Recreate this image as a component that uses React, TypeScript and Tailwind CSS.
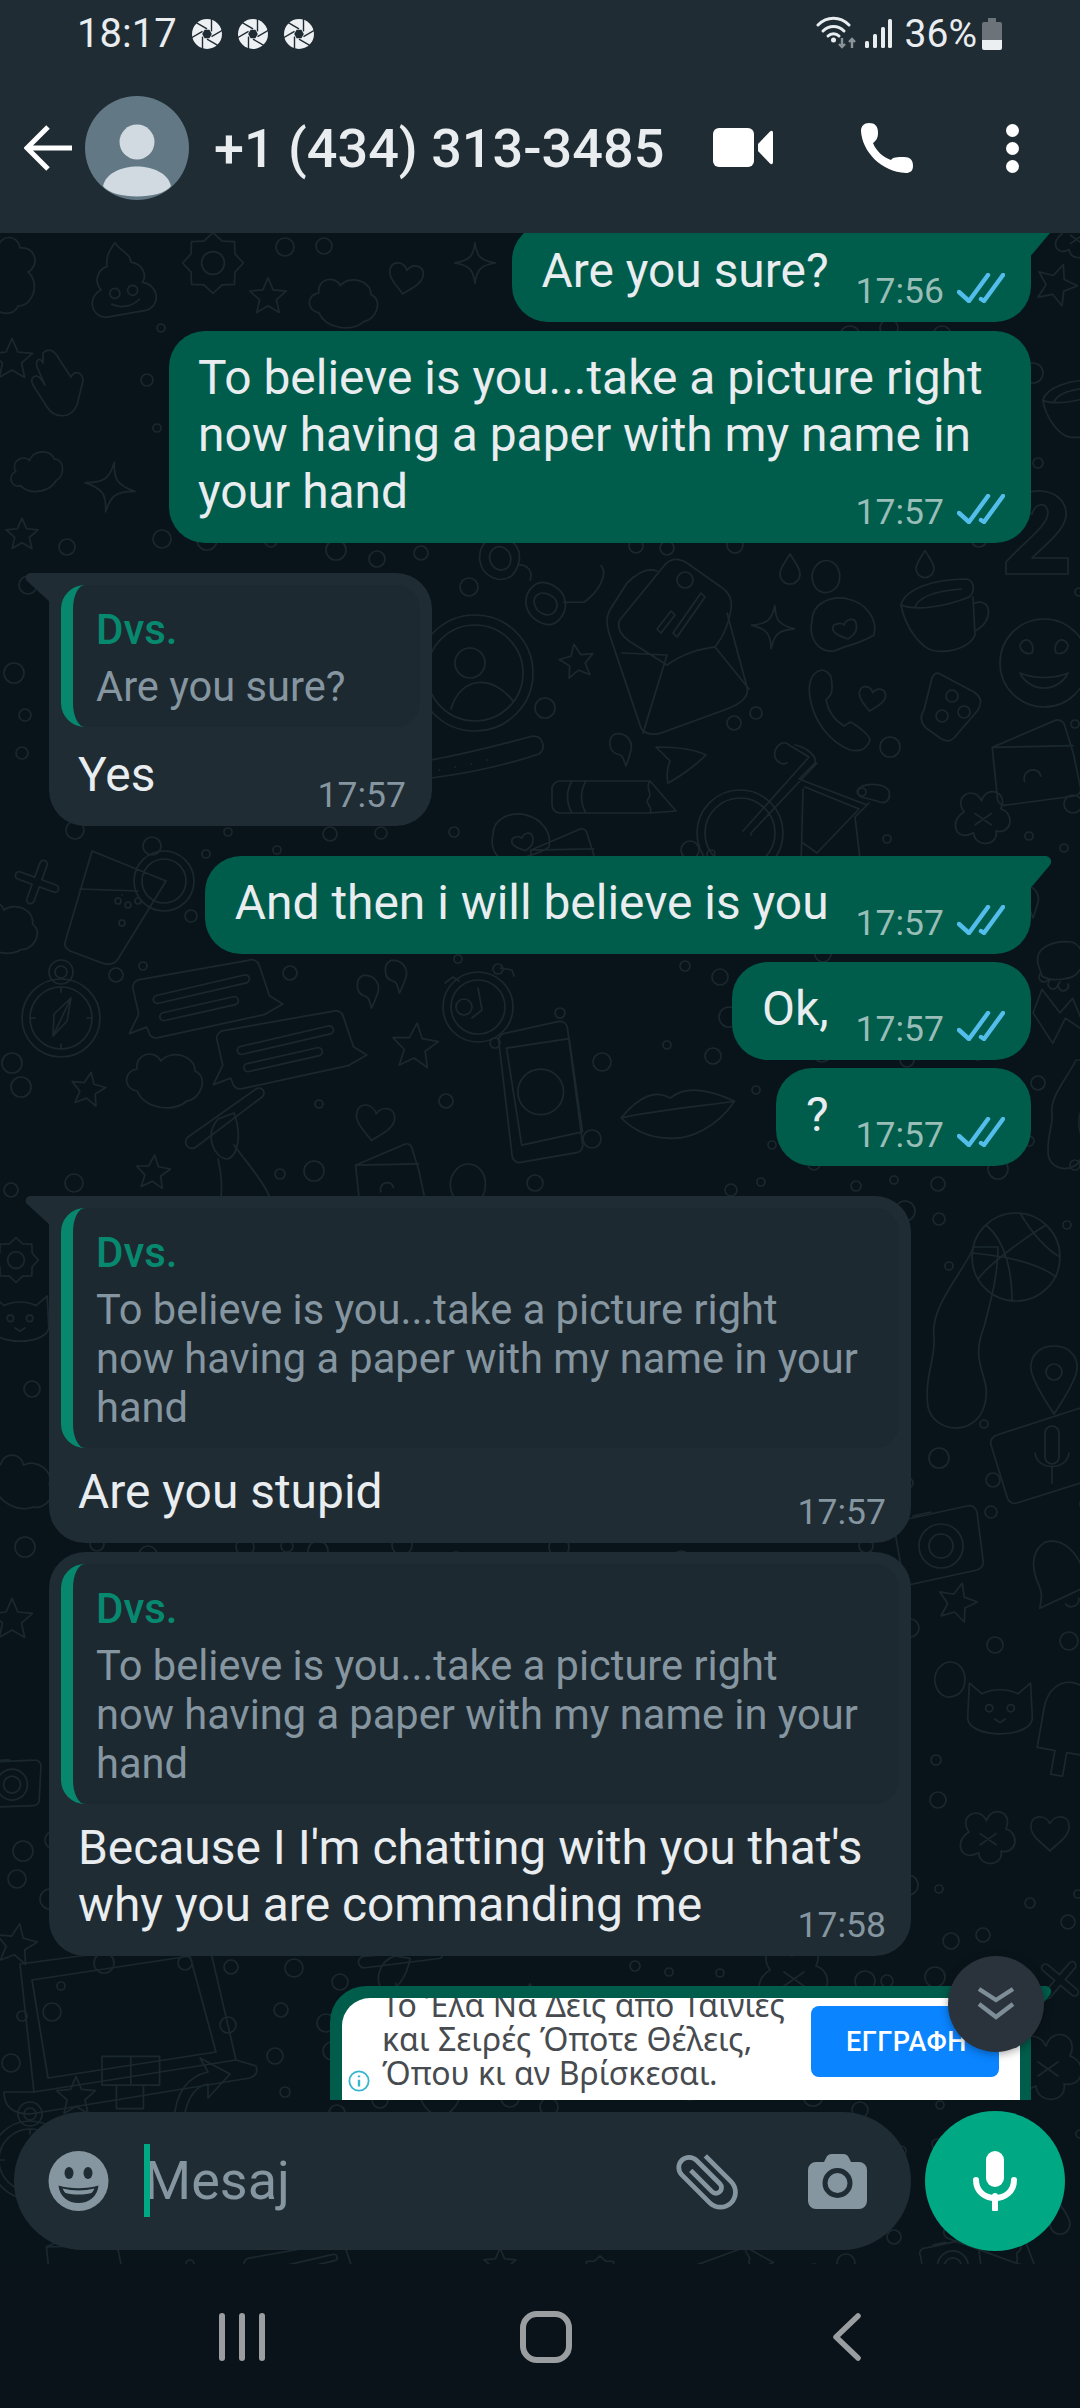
import React from "react";

const c = (x: number, y: number, r: number) =>
  `M${x - r} ${y}a${r} ${r} 0 1 0 ${2 * r} 0a${r} ${r} 0 1 0 ${-2 * r} 0`;

const starPath = (() => {
  let d = "";
  for (let i = 0; i < 10; i++) {
    const r = i % 2 === 0 ? 24 : 11;
    const a = (Math.PI / 5) * i - Math.PI / 2;
    d += `${i === 0 ? "M" : "L"}${(r * Math.cos(a)).toFixed(1)} ${(r * Math.sin(a)).toFixed(1)}`;
  }
  return d + "Z";
})();

const gearPath = (() => {
  let d = "";
  for (let i = 0; i < 16; i++) {
    const r = i % 2 === 0 ? 32 : 25;
    const a = (Math.PI / 8) * i;
    d += `${i === 0 ? "M" : "L"}${(r * Math.cos(a)).toFixed(1)} ${(r * Math.sin(a)).toFixed(1)}`;
  }
  return d + "Z" + c(0, 0, 12);
})();

const D: Record<string, string> = {
  star: starPath,
  gear: gearPath,
  sparkle: "M0 -24C2 -8 6 -3 24 0C6 3 2 8 0 24C-2 8 -6 3 -24 0C-6 -3 -2 -8 0 -24Z",
  plus: "M-4 -20a4 4 0 0 1 8 0v16h16a4 4 0 0 1 0 8h-16v16a4 4 0 0 1-8 0v-16h-16a4 4 0 0 1 0-8h16z",
  heart: "M0 -8C-6 -20 -24 -20 -24 -4C-24 8 -8 18 0 26C8 18 24 8 24 -4C24 -20 6 -20 0 -8Z",
  cloud: "M-28 14C-42 12 -42 -6 -28 -8C-30 -24 -10 -28 -4 -16C6 -28 30 -22 30 -6C44 0 36 22 22 24C8 36 -20 32 -28 14Z",
  quote: "M-8 -14C4 -16 10 -6 8 2C6 10 5 13 3 18C0 10 0 7 -6 6C-14 4 -16 -10 -8 -14Z",
  drop: "M0 -16C6 -6 10 -2 10 4A10 10 0 0 1 -10 4C-10 -2 -6 -6 0 -16Z",
  compass: c(0, 0, 39) + c(0, 0, 31) + c(0, -46, 6) + c(0, -46, 12) + "M10 -20L-8 18L-7 -4ZM10 -20L6 3L-8 18M0 -31V-26M0 31V26M31 0H26M-31 0H-26",
  chat: "M-68 -16a8 8 0 0 1 6 -10L50 -30a8 8 0 0 1 10 6L66 8L78 18L58 26L-50 34a8 8 0 0 1 -8 -4L-60 22L-78 26L-66 8Z M-46 -8L44 -16a4 4 0 0 1 1 8L-45 0a4 4 0 0 1 -1 -8Z M-42 10L30 4a4 4 0 0 1 1 8L-41 18a4 4 0 0 1 -1 -8Z",
  envelope: "M-20 -72C-30 -76 -40 -70 -50 -60L-66 -35C-72 -25 -70 -18 -68 -10L-36 85C-32 92 -22 92 -16 90L50 66C66 60 72 52 70 44L50 -30M-58 -22C-60 -14 -56 -8 -48 -2L-10 22C10 8 25 6 38 4C46 -6 52 -20 54 -34C56 -46 50 -52 44 -56L10 -80C0 -86 -8 -84 -14 -76ZM-55 10L-10 12L-34 90M38 4L72 46M-20 -14L-6 -32L-2 -28L-16 -10ZM-4 -10L24 -50L28 -46L0 -6Z",
  glasses: "M-50 -24C-68 -24 -72 -4 -64 8C-54 22 -34 20 -28 6C-26 -4 -28 -24 -50 -24ZM-48 -14C-58 -14 -60 -4 -56 2C-50 10 -40 10 -36 2C-34 -4 -38 -14 -48 -14ZM12 -4C-6 -4 -10 14 -2 26C8 38 30 38 34 24C38 10 30 -4 12 -4ZM14 6C4 6 0 14 4 20C10 28 22 28 26 20C28 12 24 6 14 6ZM-28 -6C-20 -10 -12 -8 -10 2M30 6L48 -4M48 -4C56 -20 56 -40 46 -44",
  pencil: "M-50 -16H40L66 14L40 16H-50a8 8 0 0 1 -8 -8V-8a8 8 0 0 1 8 -8ZM-38 -16C-44 -6 -44 6 -38 16M-24 -16C-30 -6 -30 6 -24 16M40 -16C34 -8 44 -4 38 2C34 6 44 10 40 16",
  plane: "M-24 -16C-4 -16 14 -14 26 -8C14 4 -4 16 -12 20C-14 10 -12 4 -10 -2Z",
  bike: c(-57, 26, 43) + c(-57, 26, 35) + "M-54 24L12 -50L-8 -62C-14 -68 -24 -60 -22 -50C-20 -44 -14 -42 -10 -44M-2 -62C8 -60 20 -52 18 -44L2 -28L70 -2M-46 28L-46 26L20 -44M6 -18L4 60M8 -20L62 2L20 46L6 36M64 -20C70 -24 88 -24 92 -16C94 -6 88 -2 80 -6L64 -10C58 -14 60 -18 64 -20ZM72 -4L58 10L64 60",
  handset: "M-18 -40C-30 -38 -32 -24 -30 -12C-26 12 -10 32 10 40C20 42 26 40 30 30C30 26 20 18 14 14C10 10 8 14 4 16C-6 10 -12 0 -14 -10C-10 -14 -8 -16 -8 -22C-8 -30 -8 -38 -18 -40Z",
  cup: "M-34 -12C-30 -28 -2 -38 32 -38C40 -36 40 -24 34 -20C10 -10 -20 -6 -34 -12ZM-34 -12C-30 10 -14 32 0 34C20 36 36 28 40 18L38 -20M-20 -10C-16 -20 0 -26 26 -28M40 -14C56 -20 60 4 40 14",
  avatar: c(0, 0, 58) + c(0, 0, 48) + c(-5, -10, 15) + "M-24 36C-14 2 18 2 38 28",
  strap: "M-62 10C-20 2 10 -6 40 -14a10 10 0 0 1 6 18C10 16 -30 24 -62 28M-54 20h.5M-38 17h.5M-22 14h.5M-6 10h.5",
  blobheart: "M-30 -6C-30 -24 -10 -32 6 -28C24 -24 36 -8 32 8C20 16 6 18 -8 24C-24 26 -34 10 -30 -6ZM6 12C-6 8 -12 4 -8 -2C-4 -4 0 -4 2 -2C4 -8 12 -10 14 -4C16 4 12 8 6 12Z",
  dice: "M-10 -34L24 -16C32 -10 32 -6 28 2L4 30C0 34 -4 34 -10 30L-24 20C-30 14 -30 8 -26 2L-18 -30C-16 -34 -14 -36 -10 -34Z" + c(2, -12, 6) + c(-8, 8, 6) + c(14, 4, 6),
  hand: "M-26 -30C-20 -36 -14 -32 -10 -24L2 -6C6 -14 14 -10 14 -2L8 22C2 36 -14 36 -22 24L-36 2C-40 -6 -32 -10 -28 -4L-24 2L-32 -16C-34 -24 -28 -26 -26 -20Z",
  poop: "M0 -40C4 -30 14 -26 12 -18C24 -14 26 -2 20 4C34 8 36 28 20 32H-22C-38 28 -36 8 -22 4C-28 -6 -22 -16 -12 -18C-12 -28 -6 -34 0 -40Z" + c(-9, 10, 5) + c(9, 10, 5) + "M-14 20C-6 26 6 26 14 20",
  glass: "M-38 -54L36 -24L-12 54C-16 60 -22 60 -28 58L-60 46C-66 42 -66 40 -64 34ZM-50 -16L8 -14M-8 -10h.1" + c(-12, -4, 3) + c(-2, 0, 3) + c(8, -4, 3) + c(-8, 18, 3) + c(34, -24, 30) + c(34, -24, 22),
  phone: "M-30 -60L24 -72a8 8 0 0 1 10 6L50 56a8 8 0 0 1 -6 10L-14 76a8 8 0 0 1 -10 -6L-38 -50a8 8 0 0 1 8 -10ZM-30 -44L36 -54L50 44L-14 58Z" + c(6, 2, 24),
  lips: "M-50 0C-30 -20 -16 -22 -4 -14C10 -24 30 -20 54 -6C36 16 10 26 -10 22C-26 20 -40 12 -50 0ZM-50 0C-20 -4 20 -4 54 -6",
  laptop: "M-120 -66L60 -90a10 10 0 0 1 10 8L96 30L-106 62ZM-108 -50L50 -74L76 22L-92 48ZM-136 62L-106 62L96 30L116 36C118 42 116 46 110 48L-110 84C-128 84 -136 76 -136 62Z",
  ball: c(0, 0, 44) + "M-30 -32C-10 -16 -4 16 -4 44M30 -32C10 -20 -26 6 -38 22M-44 -4C-20 -2 20 4 40 20M4 -44C16 -24 30 -8 44 0",
  camera: "M-34 -20L30 -34a8 8 0 0 1 10 6L46 20a8 8 0 0 1 -6 10L-24 44a8 8 0 0 1 -10 -6L-42 -8a8 8 0 0 1 8 -12Z" + c(4, 6, 22) + c(4, 6, 12) + "M-24 -24L-6 -28",
  pin: "M0 -34C18 -34 26 -20 22 -6C18 6 8 22 0 34C-8 22 -18 6 -22 -6C-26 -20 -18 -34 0 -34Z" + c(0, -8, 8),
  card: "M-50 -18L30 -44a8 8 0 0 1 10 4L56 14a8 8 0 0 1 -4 10L-30 50a8 8 0 0 1 -10 -6L-56 -8a8 8 0 0 1 6 -10ZM-2 -20a7 7 0 0 1 14 0V4a7 7 0 0 1 -14 0ZM-12 0C-10 18 20 18 22 0M5 14V30",
  popsicle: "M-24 -10C-24 -50 24 -50 24 -10V30H6V54H-6V30H-24Z",
  bell: "M0 -40C18 -38 26 -20 26 0C26 12 32 18 36 24H-36C-32 18 -26 12 -26 0C-26 -20 -18 -38 0 -40ZM-8 32C-6 40 6 40 8 32",
  squares: "M-40 -24L-8 -24L-8 8L-40 8ZM-8 -24H24V8H-8ZM-24 8V34H6V8",
  arrow: "M-26 30C-24 0 -10 -14 8 -18L0 -32L30 -16L8 8L8 -6C-4 -4 -14 8 -16 30Z",
  bolt: "M-20 -34L0 -8L14 -24L30 14L6 -2L-8 26L-30 -8Z",
  foot: "M-22 -6C-26 -24 -4 -30 12 -28C24 -24 26 -6 18 2C14 10 -10 12 -18 6ZM-20 4a5 5 0 1 0 8 6M-10 10a5 5 0 1 0 8 4M0 12a5 5 0 1 0 8 2",
  long: "M10 -100C-4 -70 -34 -40 -30 -10C-28 10 -40 30 -36 60C-30 86 10 90 20 60C30 30 4 20 20 -20C26 -44 34 -70 34 -100C26 -100 18 -100 10 -100Z",
  blob: "M0 -30C18 -30 28 -12 24 8C20 24 6 30 -6 28C-22 24 -28 4 -24 -10C-20 -22 -10 -30 0 -30Z",
  face: c(0, 0, 44) + "M-24 -18C-20 -28 -8 -22 -12 -10C-18 -8 -24 -12 -24 -18ZM24 -18C20 -28 8 -22 12 -10C18 -8 24 -12 24 -18ZM-24 10C-14 30 14 30 24 10C10 16 -10 16 -24 10Z",
  cat: "M-34 -30L-20 -18C-8 -24 8 -24 20 -18L34 -30L36 10C32 32 -32 32 -36 10Z" + c(-12, -2, 4) + c(12, -2, 4) + "M-6 10L0 14L6 10",
  two: "M-26 -24C-20 -46 24 -44 26 -18C28 -2 6 14 -8 28H28V44H-34V32C-14 10 8 -4 8 -18C6 -28 -4 -28 -8 -16Z",
  flower: "M-20 -10C-34 -30 -8 -44 2 -24C8 -44 36 -36 26 -14C44 -8 40 18 20 14C24 32 -6 36 -8 16C-30 28 -40 2 -20 -10ZM-6 -8L14 6M14 -8L-6 6",
  cake: "M-42 -14L28 -44a8 8 0 0 1 10 4L48 -8L56 30a8 8 0 0 1 -6 10L-26 50a8 8 0 0 1 -10 -6ZM-42 -14L48 -16M-6 24C-10 10 10 6 12 18",
  hat: "M-40 12L28 -36a5 5 0 0 1 6 8L-32 22a5 5 0 0 1 -8 -10ZM-10 -6C-24 10 -14 34 0 34C10 30 14 10 6 -12ZM6 20C20 40 40 60 46 84M-10 34C-6 50 -6 70 -8 84",
};

// [name, x, y, scale, rotation]
const P: [string, number, number, number, number][] = [
  ["cloud", 12, 276, 1, 90], ["poop", 122, 282, 1, -10], ["gear", 213, 263, 0.95, 0], ["star", 268, 297, 0.8, 0],
  ["cloud", 344, 300, 0.9, 0], ["heart", 406, 276, 0.7, 10], ["sparkle", 475, 263, 0.85, 0], ["star", 1056, 285, 0.9, 20],
  ["flower", 1074, 240, 0.6, 0], ["hand", 69, 383, 1, 0], ["cloud", 36, 470, 0.7, -20], ["sparkle", 110, 487, 1.05, 10],
  ["star", 12, 360, 0.9, 0], ["star", 22, 535, 0.7, 0], ["cup", 1070, 410, 0.8, 0], ["two", 1040, 530, 1, 0],
  ["glasses", 540, 583, 1, 28], ["avatar", 475, 673, 1, 0], ["star", 577, 662, 0.75, -10], ["envelope", 677, 643, 1, 0],
  ["sparkle", 773, 627, 0.9, 5], ["blobheart", 842, 627, 1, 0], ["handset", 840, 710, 1, 0], ["heart", 872, 697, 0.55, 10],
  ["cup", 935, 617, 1, 0], ["dice", 950, 708, 1, 0], ["strap", 493, 750, 1, 0], ["pencil", 610, 797, 1, 0],
  ["plane", 680, 763, 1, 0], ["quote", 623, 748, 1, 0], ["bike", 797, 807, 1, 0], ["face", 1044, 663, 1, 0],
  ["blob", 826, 577, 0.55, 0], ["drop", 790, 570, 1, 0], ["drop", 925, 565, 0.9, 0], ["cake", 1030, 760, 0.9, 0],
  ["cake", 560, 860, 0.7, 0], ["blobheart", 520, 840, 0.9, 0], ["flower", 980, 820, 0.8, 0],
  ["glass", 130, 905, 1, 0], ["plus", 37, 882, 0.95, 20], ["cloud", 5, 925, 0.9, 10], ["compass", 61, 1018, 1, 0],
  ["chat", 203, 997, 1, -8], ["chat", 287, 1048, 1, -8], ["quote", 370, 990, 1, 5], ["quote", 398, 975, 1, 5],
  ["star", 415, 1047, 1, 5], ["cloud", 165, 1077, 1, 0], ["star", 88, 1090, 0.75, 10],
  ["heart", 375, 1120, 0.8, 10], ["star", 153, 1173, 0.75, 5], ["hat", 228, 1125, 1, 0], ["cake", 385, 1175, 0.7, 0],
  ["phone", 535, 1090, 0.95, 0], ["lips", 676, 1113, 1.1, -5], ["blob", 468, 1185, 0.7, 0],
  ["foot", 1060, 970, 1, 0], ["bolt", 1060, 1020, 0.9, 0], ["long", 1070, 1120, 0.6, 0],
  ["quote", 1030, 900, 1, 0], ["ball", 1016, 1257, 1, 0], ["pin", 1054, 1380, 1, 0], ["long", 964, 1347, 1, 0],
  ["card", 1047, 1453, 1, 0], ["camera", 937, 1540, 1, 0], ["star", 957, 1603, 0.85, 15], ["bell", 1060, 1575, 0.9, -25],
  ["popsicle", 1066, 1722, 1, 10], ["cat", 1000, 1710, 0.9, 0], ["blob", 950, 1680, 0.6, 0], ["heart", 1050, 1830, 0.8, 0],
  ["flower", 985, 1840, 0.8, 0], ["plus", 1060, 1980, 0.95, 40], ["flower", 1044, 2070, 1, 0],
  ["cat", 20, 1320, 0.8, 0], ["cloud", 22, 1480, 0.9, 20], ["star", 12, 1620, 0.9, 0], ["gear", 16, 1260, 0.7, 0],
  ["camera", 10, 1780, 0.7, 10], ["laptop", 140, 2030, 1, 0], ["star", 76, 2097, 0.85, 0], ["squares", 138, 2078, 0.9, 0],
  ["arrow", 200, 2090, 1, 0], ["star", 16, 1945, 0.9, 10], ["hat", 400, 1965, 0.9, 30], ["drop", 530, 2000, 1, 0],
  ["flower", 790, 1980, 1, 0], ["heart", 440, 2100, 0.8, 0], ["pencil", 990, 2240, 0.8, 20], ["compass", 30, 2160, 1, 0],
  ["cake", 80, 2258, 0.8, 0], ["camera", 950, 2262, 0.7, 0], ["chat", 300, 2272, 0.8, -8], ["gear", 600, 2275, 0.6, 0],
  ["pencil", 720, 2270, 0.8, -20], ["drop", 1060, 2220, 1, 0], ["star", 500, 2265, 0.7, 0],
];

const dots = (() => {
  const out: [number, number, number][] = [];
  let s = 7;
  const rnd = () => ((s = (s * 16807) % 2147483647) % 1000) / 1000;
  for (let y = 240; y < 2264; y += 42) {
    for (let x = 6; x < 1080; x += 44) {
      const px = x + rnd() * 26;
      const py = y + rnd() * 26;
      const r = 3.5 + rnd() * 7;
      const clear = P.every(([, a, b, k]) => Math.hypot(a - px, b - py) > 46 * k + 14);
      if (clear && rnd() > 0.25) out.push([Math.round(px), Math.round(py), Math.round(r)]);
    }
  }
  return out;
})();

function Wallpaper() {
  return (
    <svg
      className="absolute inset-0 w-[1080px] h-[2031px]"
      viewBox="0 233 1080 2031"
      fill="none"
      stroke="#1a282e"
      strokeWidth="1.7"
      strokeLinejoin="round"
      strokeLinecap="round"
    >
      {P.map(([n, x, y, k, r], i) => (
        <path key={i} d={D[n]} transform={`translate(${x} ${y}) rotate(${r}) scale(${k})`} vectorEffect="non-scaling-stroke" />
      ))}
      <circle cx="478" cy="1007" r="35" />
      <circle cx="478" cy="1007" r="27" />
      <path d="M478 988l4 22-10 8M445 983l8-6 6 4M500 968l12 2 2 6" />
      <path d={dots.map(([x, y, r]) => c(x, y, r)).join("")} />
    </svg>
  );
}

function Aperture() {
  const lines = [0, 60, 120, 180, 240, 300];
  return (
    <svg viewBox="-15 -15 30 30" className="w-[30px] h-[30px] shrink-0">
      <circle r="15" fill="#eef1f3" />
      <g stroke="#1f2c34" strokeWidth="1.4">
        {lines.map((a) => (
          <line key={a} x1="4.5" y1="-2.6" x2="4.5" y2="-16" transform={`rotate(${a})`} />
        ))}
      </g>
      <polygon points="4.8,0 2.4,4.2 -2.4,4.2 -4.8,0 -2.4,-4.2 2.4,-4.2" fill="#1f2c34" />
    </svg>
  );
}

function StatusBar() {
  return (
    <div className="h-[66px] flex items-center pl-[77px] pr-[78px] pt-[1px] text-[40px] leading-[46px] text-[#e9edef]">
      <span>18:17</span>
      <div className="flex ml-[15px] gap-[16px]">
        <Aperture />
        <Aperture />
        <Aperture />
      </div>
      <svg viewBox="0 0 42 34" className="ml-auto w-[42px] h-[34px] mt-[-2px]" fill="none">
        <g stroke="#e9edef" strokeWidth="3" strokeLinecap="round">
          <path d="M2 9C11 0 24 0 33 9" />
          <path d="M7 15C13 9 22 9 28 15" />
          <path d="M12 20C15 17 20 17 23 20" />
        </g>
        <circle cx="17.5" cy="24" r="2.5" fill="#e9edef" />
        <path d="M26 22v9m-3-3l3 3 3-3M36 32v-9m-3 3l3-3 3 3" stroke="#8c9398" strokeWidth="2.4" />
      </svg>
      <svg viewBox="0 0 27 30" className="ml-[7px] w-[27px] h-[30px]" fill="#e9edef">
        <rect x="0" y="22" width="4" height="7" rx="1.5" />
        <rect x="8" y="15" width="4" height="14" rx="1.5" />
        <rect x="16" y="8" width="4" height="21" rx="1.5" />
        <rect x="23" y="0" width="4" height="29" rx="1.5" />
      </svg>
      <span className="ml-[13px] text-[39px]">36%</span>
      <svg viewBox="0 0 20 32" className="ml-[5px] w-[20px] h-[32px]">
        <path d="M6 0h8v4h4a2 2 0 0 1 2 2v16H0V6a2 2 0 0 1 2-2h4z" fill="#6d7479" />
        <path d="M0 22h20v8a2 2 0 0 1-2 2H2a2 2 0 0 1-2-2z" fill="#eceff1" />
      </svg>
    </div>
  );
}

function Header() {
  return (
    <header className="h-[233px] shrink-0 bg-[#1f2c34] flex flex-col">
      <StatusBar />
      <div className="h-[164px] flex items-center">
        <svg viewBox="0 0 48 48" className="ml-[24px] w-[48px] h-[48px]" fill="none" stroke="#fff" strokeWidth="5">
          <path d="M48 24H4M24 3L3 24l21 21" />
        </svg>
        <svg viewBox="0 0 104 104" className="ml-[13px] w-[104px] h-[104px]">
          <defs>
            <clipPath id="av">
              <circle cx="52" cy="52" r="52" />
            </clipPath>
          </defs>
          <circle cx="52" cy="52" r="52" fill="#627884" />
          <g clipPath="url(#av)" fill="#d1dae1">
            <circle cx="52" cy="46" r="17.5" />
            <path d="M18 90C24 64 80 64 86 90C76 104 28 104 18 90Z" />
          </g>
        </svg>
        <span className="ml-[25px] mt-[2px] text-[54px] leading-[62px] font-medium text-[#e9edef] whitespace-nowrap">
          +1 (434) 313-3485
        </span>
        <svg viewBox="0 0 60 40" className="ml-auto w-[60px] h-[40px]" fill="#fff">
          <rect x="0" y="0" width="41" height="39" rx="6" />
          <path d="M45 16L57 3.5C58.5 2 60 3 60 5V34C60 36 58.5 37 57 35.5L45 23Z" />
        </svg>
        <svg viewBox="0 0 52 50" className="ml-[88px] w-[52px] h-[50px]" fill="#fff">
          <path d="M8 0C14 0 17 3 17 10C17 15 15 18 12 20C15 28 22 34 30 37C32 34 36 34 43 34C49 34 52 37 52 43C52 48 49 50 45 50C20 49 1 28 0 8C0 3 3 0 8 0Z" />
        </svg>
        <div className="ml-[93px] mr-[61px] flex flex-col gap-[5px]">
          <div className="w-[13px] h-[13px] rounded-full bg-white" />
          <div className="w-[13px] h-[13px] rounded-full bg-white" />
          <div className="w-[13px] h-[13px] rounded-full bg-white" />
        </div>
      </div>
    </header>
  );
}

function Ticks() {
  return (
    <svg viewBox="0 0 48 30" className="w-[48px] h-[30px] mb-[8px]" fill="none" stroke="#53bdeb" strokeWidth="4.4" strokeLinecap="round" strokeLinejoin="round">
      <path d="M2 19l10 9L31 2M24 26l3 2L46 2" />
    </svg>
  );
}

function OutMeta({ t, className }: { t: string; className: string }) {
  return (
    <div className={`flex items-end gap-[13px] shrink-0 text-[35.5px] leading-[40px] text-[#99bdb7] ${className}`}>
      <span>{t}</span>
      <Ticks />
    </div>
  );
}

function OutTail() {
  return (
    <svg viewBox="0 0 23 34" className="absolute top-0 -right-[21px] w-[23px] h-[34px]" fill="#005c4b">
      <path d="M0 0H16C21 0 24 5 21 9L0 34Z" />
    </svg>
  );
}

function InTail() {
  return (
    <svg viewBox="0 0 26 30" className="absolute top-0 -left-[24px] w-[26px] h-[30px]" fill="#1f2c34">
      <path d="M26 0H6C1 0 -1 5 2 8L26 30Z" />
    </svg>
  );
}

function Reply({ children }: { children: React.ReactNode }) {
  return (
    <div className="ml-[12px] mr-[12px] mt-[12px] rounded-[24px] border-l-[12px] border-[#07876e] bg-[#1d2931] pl-[23px] pr-[10px] pt-[20px] pb-[16px]">
      <div className="text-[42px] leading-[49px] font-medium text-[#07896f] mb-[8px]">Dvs.</div>
      <div className="text-[41.6px] leading-[49px] text-[#8696a0] whitespace-nowrap">{children}</div>
    </div>
  );
}

const longReply = (
  <>
    To believe is you...take a picture right
    <br />
    now having a paper with my name in your
    <br />
    hand
  </>
);

function InTime({ t, className }: { t: string; className: string }) {
  return <div className={`text-[35.5px] leading-[40px] text-[#8696a0] ${className}`}>{t}</div>;
}

function App() {
  return (
    <div className="w-[1080px] h-[2408px] flex flex-col overflow-hidden bg-[#0b141a] font-[family-name:Roboto,sans-serif] text-[47.9px] leading-[57px] text-[#e9edef]">
      <Header />
      <main className="relative flex-1 flex flex-col bg-[#09141a]">
        <Wallpaper />
        <div className="relative h-[1867px] shrink-0 overflow-hidden flex flex-col pl-[49px] pr-[49px]">
          <div className="relative shrink-0 self-end -mt-[9px] flex items-end pl-[29px] pr-[26px] pt-[19px] pb-[22px] rounded-[36px] rounded-tr-none bg-[#005c4b]">
            <OutTail />
            <span className="mr-[27px]">Are you sure?</span>
            <OutMeta t="17:56" className="-mb-[11px]" />
          </div>

          <div className="shrink-0 self-end w-[862px] mt-[9px] flex flex-col pl-[29px] pr-[26px] pt-[19px] pb-[11px] rounded-[36px] bg-[#005c4b]">
            <p className="whitespace-nowrap">
              To believe is you...take a picture right
              <br />
              now having a paper with my name in
              <br />
              your hand
            </p>
            <OutMeta t="17:57" className="self-end -mt-[29px]" />
          </div>

          <div className="relative shrink-0 self-start w-[383px] mt-[30px] flex flex-col rounded-[36px] rounded-tl-none bg-[#1f2c34]">
            <InTail />
            <Reply>Are you sure?</Reply>
            <div className="flex items-end justify-between pl-[29px] pr-[26px] mt-[20px] pb-[22px]">
              <span>Yes</span>
              <InTime t="17:57" className="-mb-[11px]" />
            </div>
          </div>

          <div className="relative shrink-0 self-end mt-[30px] flex items-end pl-[30px] pr-[26px] pt-[19px] pb-[22px] rounded-[36px] rounded-tr-none bg-[#005c4b]">
            <OutTail />
            <span className="mr-[27px]">And then i will believe is you</span>
            <OutMeta t="17:57" className="-mb-[11px]" />
          </div>

          <div className="shrink-0 self-end mt-[8px] flex items-end pl-[30px] pr-[26px] pt-[19px] pb-[22px] rounded-[36px] bg-[#005c4b]">
            <span className="mr-[27px]">Ok,</span>
            <OutMeta t="17:57" className="-mb-[11px]" />
          </div>

          <div className="shrink-0 self-end mt-[8px] flex items-end pl-[30px] pr-[26px] pt-[19px] pb-[22px] rounded-[36px] bg-[#005c4b]">
            <span className="mr-[27px]">?</span>
            <OutMeta t="17:57" className="-mb-[11px]" />
          </div>

          <div className="relative shrink-0 self-start w-[862px] mt-[30px] flex flex-col rounded-[36px] rounded-tl-none bg-[#1f2c34]">
            <InTail />
            <Reply>{longReply}</Reply>
            <div className="flex items-end justify-between pl-[29px] pr-[25px] mt-[16px] pb-[22px]">
              <span>Are you stupid</span>
              <InTime t="17:57" className="-mb-[11px]" />
            </div>
          </div>

          <div className="shrink-0 self-start w-[862px] mt-[9px] flex flex-col rounded-[36px] bg-[#1f2c34]">
            <Reply>{longReply}</Reply>
            <div className="flex flex-col pl-[29px] pr-[25px] mt-[16px] pb-[11px]">
              <p className="whitespace-nowrap">
                Because I I'm chatting with you that's
                <br />
                why you are commanding me
              </p>
              <InTime t="17:58" className="self-end -mt-[29px]" />
            </div>
          </div>

          <div className="relative shrink-0 self-end w-[701px] h-[140px] mt-[30px] pt-[12px] pl-[12px] pr-[11px] rounded-t-[36px] rounded-tr-none bg-[#005c4b]">
            <OutTail />
            <div className="h-[128px] rounded-tl-[28px] bg-white overflow-hidden flex items-start font-[family-name:'Noto_Sans',sans-serif] text-[#474b4f]">
              <svg viewBox="0 0 24 24" className="ml-[6px] mt-[72px] w-[22px] h-[22px] shrink-0" fill="none" stroke="#39b6cf" strokeWidth="2">
                <circle cx="12" cy="12" r="10.5" />
                <path d="M12 10.5V18M12 6v2" strokeWidth="2.6" />
              </svg>
              <p className="ml-[12px] -mt-[10px] text-[32px] leading-[34px] whitespace-nowrap">
                Το Έλα Να Δεις από Ταινίες
                <br />
                και Σειρές Όποτε Θέλεις,
                <br />
                Όπου κι αν Βρίσκεσαι.
              </p>
              <div className="ml-auto mr-[21px] mt-[8px] w-[188px] h-[71px] rounded-[8px] bg-[#0a84ff] flex items-center pl-[35px] text-[27px] leading-[32px] font-medium tracking-[0.5px] text-white font-[family-name:Roboto,sans-serif]">
                ΕΓΓΡΑΦΗ
              </div>
            </div>
          </div>
        </div>

        <div className="absolute top-[1723px] left-[948px] w-[96px] h-[96px] rounded-full bg-[#2a333b] shadow-[0_2px_8px_rgba(0,0,0,0.35)] flex items-center justify-center">
          <svg viewBox="0 0 38 34" className="w-[38px] h-[34px]" fill="none" strokeWidth="4.4">
            <path d="M2 2l17 11L36 2" stroke="#7e8e98" />
            <path d="M2 17l17 13 17-13" stroke="#7e8e98" />
          </svg>
        </div>

        <div className="relative flex items-center pl-[14px] pt-[11px] gap-[14px]">
          <div className="w-[897px] h-[138px] rounded-[69px] bg-[#1f2c34] flex items-center">
            <svg viewBox="0 0 60 60" className="ml-[34px] w-[61px] h-[60px] shrink-0">
              <circle cx="30" cy="30" r="30" fill="#8696a0" />
              <ellipse cx="20.5" cy="22" rx="4.5" ry="6" fill="#1f2c34" />
              <ellipse cx="39.5" cy="22" rx="4.5" ry="6" fill="#1f2c34" />
              <path d="M10 34.5C22 38 38 38 50 34.5C49 46 40 52 30 52C20 52 11 46 10 34.5Z" fill="#1f2c34" />
              <path d="M14 37.5C24 40 36 40 46 37.5C45 39.5 44 41 43 42C34 44 26 44 17 42C16 41 15 39.5 14 37.5Z" fill="#8696a0" />
            </svg>
            <div className="relative ml-[35px] text-[54px] leading-[60px] text-[#8696a0]">
              <div className="absolute left-0 -top-[7px] w-[6px] h-[73px] bg-[#00a884]" />
              <span>Mesaj</span>
            </div>
            <svg viewBox="0 0 24 24" className="ml-auto w-[76px] h-[76px] -rotate-45 shrink-0" fill="#8696a0">
              <path d="M16.5 6v11.5c0 2.21-1.79 4-4 4s-4-1.79-4-4V5a2.5 2.5 0 015 0v10.5c0 .55-.45 1-1 1s-1-.45-1-1V6H10v9.5a2.5 2.5 0 005 0V5c0-2.21-1.79-4-4-4S7 2.79 7 5v12.5c0 3.04 2.46 5.5 5.5 5.5s5.5-2.46 5.5-5.5V6h-1.5z" />
            </svg>
            <svg viewBox="0 0 59 55" className="ml-[63px] mr-[44px] w-[59px] h-[55px] shrink-0">
              <path d="M8 8h8l2-4c1-2.5 3-4 6-4h11c3 0 5 1.5 6 4l2 4h8a8 8 0 0 1 8 8v31a8 8 0 0 1-8 8H8a8 8 0 0 1-8-8V16a8 8 0 0 1 8-8Z" fill="#8696a0" />
              <circle cx="29.5" cy="29" r="12.5" fill="none" stroke="#1f2c34" strokeWidth="5" />
            </svg>
          </div>
          <div className="w-[140px] h-[140px] rounded-full bg-[#00a884] flex items-center justify-center">
            <svg viewBox="0 0 44 60" className="w-[44px] h-[60px]">
              <rect x="13" y="0" width="18" height="36" rx="9" fill="#fff" />
              <path d="M3 29C3 53 41 53 41 29" fill="none" stroke="#fff" strokeWidth="6" strokeLinecap="round" />
              <path d="M22 45V58" fill="none" stroke="#fff" strokeWidth="6" strokeLinecap="round" />
            </svg>
          </div>
        </div>
      </main>

      <nav className="h-[144px] shrink-0 bg-[#0b131a] flex items-start pt-[47px] pl-[219px]">
        <div className="flex gap-[14px] mt-[2px]">
          <div className="w-[6px] h-[48px] rounded-[3px] bg-[#9a9ea1]" />
          <div className="w-[6px] h-[48px] rounded-[3px] bg-[#9a9ea1]" />
          <div className="w-[6px] h-[48px] rounded-[3px] bg-[#9a9ea1]" />
        </div>
        <div className="ml-[255px] w-[52px] h-[52px] rounded-[17px] border-[6px] border-[#9a9ea1]" />
        <svg viewBox="0 0 28 48" className="ml-[261px] mt-[2px] w-[28px] h-[48px]" fill="none" stroke="#9a9ea1" strokeWidth="5.5" strokeLinecap="round" strokeLinejoin="round">
          <path d="M25 3L3 24l22 21" />
        </svg>
      </nav>
    </div>
  );
}

export default App;
